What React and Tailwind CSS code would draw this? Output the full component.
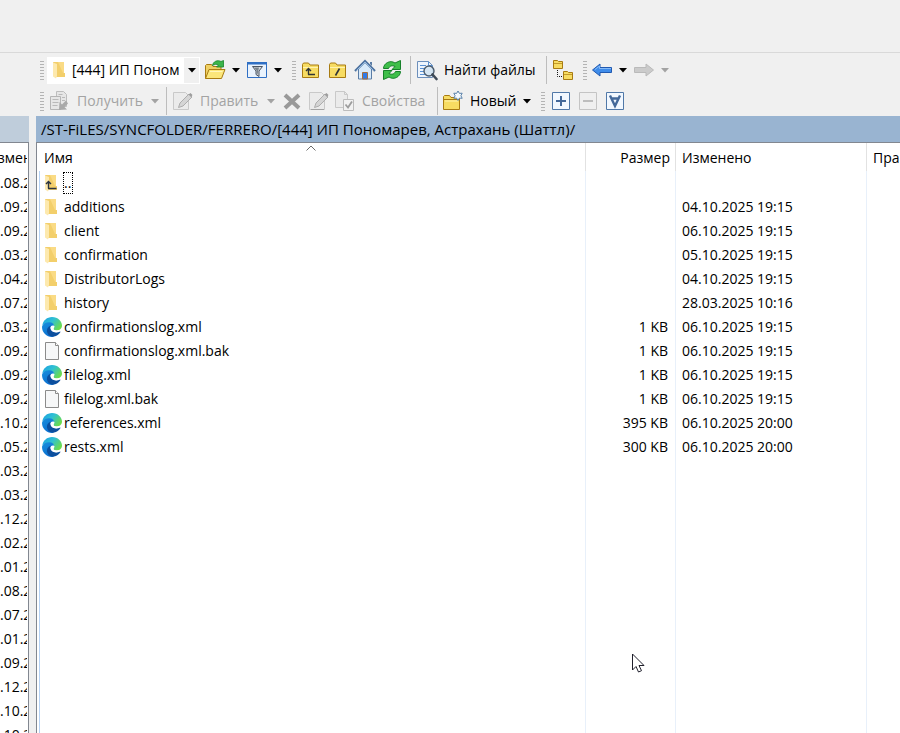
import React from "react";

const files = [
  ["..", "up", "", ""],
  ["additions", "folder", "", "04.10.2025 19:15"],
  ["client", "folder", "", "06.10.2025 19:15"],
  ["confirmation", "folder", "", "05.10.2025 19:15"],
  ["DistributorLogs", "folder", "", "04.10.2025 19:15"],
  ["history", "folder", "", "28.03.2025 10:16"],
  ["confirmationslog.xml", "edge", "1 KB", "06.10.2025 19:15"],
  ["confirmationslog.xml.bak", "file", "1 KB", "06.10.2025 19:15"],
  ["filelog.xml", "edge", "1 KB", "06.10.2025 19:15"],
  ["filelog.xml.bak", "file", "1 KB", "06.10.2025 19:15"],
  ["references.xml", "edge", "395 KB", "06.10.2025 20:00"],
  ["rests.xml", "edge", "300 KB", "06.10.2025 20:00"],
];

const leftDates = [
  ".08.2", ".09.2", ".09.2", ".03.2", ".04.2", ".07.2", ".03.2", ".09.2",
  ".09.2", ".09.2", ".10.2", ".05.2", ".03.2", ".03.2", ".12.2", ".02.2",
  ".01.2", ".08.2", ".07.2", ".01.2", ".09.2", ".12.2", ".10.2", ".10.2",
];

function FolderIcon({ up = false }) {
  return (
    <svg width="20" height="20" viewBox="0 0 20 20" className="shrink-0" aria-hidden="true">
      <path d="M3 2h11v11h1v4H6z" fill="#f3cf6b" />
      <path d="M8 2h6v11h-1z" fill="#fadb85" />
      <path d="M3 2.500 7 4v12l-1 2.500-3-2z" fill="#fde9ae" />
      {up && <path d="M6.500 15.500V9M4 11l2.500-2.500L9 11M6 15.500h8.500" fill="none" stroke="#2b3440" strokeWidth="1.400" />}
    </svg>
  );
}

function EdgeIcon() {
  return (
    <svg width="20" height="20" viewBox="0 0 20 20" className="shrink-0" aria-hidden="true">
      <defs>
        <linearGradient id="edgeTop" x1="0" y1="0" x2="1" y2="0.600">
          <stop offset="0" stopColor="#1b9de2" />
          <stop offset="0.500" stopColor="#2fc0d4" />
          <stop offset="1" stopColor="#6bdc4c" />
        </linearGradient>
        <linearGradient id="edgeSide" x1="0" y1="0" x2="0.500" y2="1">
          <stop offset="0" stopColor="#1a8fdc" />
          <stop offset="1" stopColor="#0b6fd0" />
        </linearGradient>
      </defs>
      <path d="M0.300 8.500C1 3.500 5 0 10 0c6 0 10 4.200 10 8.600 0 3-2.200 4.900-5 4.900-2.300 0-3.600-.8-3.600-1.500 0-.5.900-.9.900-2.400C12.300 7.500 10.200 6 7.200 6 4 6 1.300 7.300.3 8.500z" fill="url(#edgeTop)" />
      <path d="M0.200 9C1 6.900 3.900 5.300 7.200 5.300c3 0 4.900 1.400 5 3.700C9 8.600 7 10.500 7 13c0 3.500 2.500 6 5.500 6.600-.8.300-1.600.4-2.500.4C4.500 20 0 15.500 0 10z" fill="url(#edgeSide)" />
      <path d="M8.600 8.800C6 9.700 4.600 12 5 14.500c.4 3.200 3.800 5.600 7 5.100 2.800-.5 5-2.200 6.300-4.400.3-.5-.1-.7-.5-.5-3.800 1.700-9.400.5-9.400-3.900 0-.8.100-1.500.2-2z" fill="#0c4f9e" />
      <path d="M8.800 9.500c.8-1 2.300-1.500 3.500-.6 0 1.800-.9 2.300-.9 3.100 0 .9 1.300 1.500 3.600 1.500 1.300 0 2.500-.4 3.400-1-.6 1.400-2 2.500-3.800 2.700-3.500.4-6.300-2-5.800-5.700z" fill="#fff" />
    </svg>
  );
}

function FileIcon() {
  return (
    <svg width="20" height="20" viewBox="0 0 20 20" className="shrink-0" aria-hidden="true">
      <path d="M3.500 1.500h10l3 3v14h-13z" fill="#f6f7f8" stroke="#8b8b8b" />
      <path d="M13.500 1.500v3h3" fill="#fff" stroke="#8b8b8b" />
    </svg>
  );
}

function RowIcon({ kind }) {
  if (kind === "edge") return <EdgeIcon />;
  if (kind === "file") return <FileIcon />;
  return <FolderIcon up={kind === "up"} />;
}

function Caret({ gray = false }) {
  return (
    <svg width="8" height="5" viewBox="0 0 8 5" className="shrink-0" aria-hidden="true">
      <path d="M0 0h8L4 4.500z" fill={gray ? "#a3a3a3" : "#000"} />
    </svg>
  );
}

function Svg({ children }) {
  return (
    <svg width="22" height="22" viewBox="0 0 22 22" fill="none" className="shrink-0" aria-hidden="true">
      {children}
    </svg>
  );
}

const OpenFolder = () => (
  <Svg>
    <path d="M1.500 19.500V6.500l1-1h5l1.500 2h8v4" fill="#efd064" stroke="#a87b12" />
    <path d="M1.500 19.500 5 10.500h16L17.500 19.500z" fill="#fbe67a" stroke="#a87b12" strokeLinejoin="round" />
    <path d="M6 12.500h12.500" stroke="#fff6bd" />
    <path d="M8.500 6.500c.5-4 5-6 8.500-4l2.500-1v6.500h-7l2-2c-2-1.200-4-.6-6 .5z" fill="#3bb54a" stroke="#18832a" strokeWidth=".8" />
  </Svg>
);
const FilterWindow = () => (
  <Svg>
    <path d="M1.500 3.500h19v15h-19z" fill="#eaf3fd" stroke="#2f6fc4" />
    <path d="M1 3h20v2.500H1z" fill="#2f6fc4" />
    <path d="M6.500 7.500h10l-3.500 4.500v5.500l-3-2v-3.500z" fill="#d5dade" stroke="#4b5563" strokeLinejoin="round" />
    <path d="M8 8.500h5l-1.500 7-1-.5v-3.500z" fill="#7a848e" />
  </Svg>
);
const SmallFolder = ({ children }) => (
  <Svg>
    <path d="M2.500 18.500V5.500l1-1.500h5l1.500 2h8.500v12.500z" fill="#f7dc62" stroke="#a87b12" strokeLinejoin="round" />
    <path d="M3 8.500h15" stroke="#fff3ae" />
    {children}
  </Svg>
);
const Home = () => (
  <Svg>
    <path d="M4.500 10v10h13V10L11 3.500z" fill="#d8eafa" stroke="#5a7ca5" />
    <path d="M1 12 11 2l10 10" stroke="#4d729f" strokeWidth="2.200" />
    <path d="M2.500 11.500 11 3l8.500 8.500" stroke="#a8cdf0" strokeWidth=".8" />
    <path d="M8.500 13.500h5V20h-5z" fill="#2f7be8" stroke="#a86f3a" />
    <path d="M16 3h2v4l-2-2z" fill="#5a7ca5" />
  </Svg>
);
const Refresh = () => (
  <Svg>
    <path d="M2.500 9.500C2.500 4.500 9 .5 14 4L19.500 1.500V10.500h-8.500l3-3C11 6 8.500 7 7.500 9.500z" fill="#3fbf4a" stroke="#16812a" strokeLinejoin="round" />
    <path d="M19.500 12.500C19.500 17.500 13 21.500 8 18L2.500 20.500V11.500h8.500l-3 3C11 16 13.500 15 14.500 12.500z" fill="#3fbf4a" stroke="#16812a" strokeLinejoin="round" />
  </Svg>
);
const Find = () => (
  <Svg>
    <path d="M1.500 2.500h11l4 4v12h-15z" fill="#eef5fd" stroke="#6c8fbb" />
    <path d="M12.500 2.500v4h4M4 6.500h6M4 9.500h5M4 12.500h4M4 15.500h6" stroke="#5a92d4" />
    <circle cx="13" cy="12" r="5" fill="#d3e4f2" fillOpacity=".9" stroke="#4b5b6c" strokeWidth="1.400" />
    <path d="m16.500 15.500 4 4.500" stroke="#3f4a57" strokeWidth="2.600" strokeLinecap="round" />
  </Svg>
);
const Tree = () => (
  <Svg>
    <path d="M1.500 9.500v-8h4l1 1h4v7z" fill="#f7dc62" stroke="#a87b12" />
    <path d="M2 4.500h8" stroke="#c49a2a" />
    <path d="M11.500 20.500v-8h4l1 1h4v7z" fill="#f7dc62" stroke="#a87b12" />
    <path d="M12 15.500h8" stroke="#c49a2a" />
    <path d="M5.500 11v6.500H11" stroke="#111" strokeDasharray="1 1" />
  </Svg>
);
const Arrow = ({ forward = false }) => (
  <Svg>
    {forward ? (
      <path d="M20.500 11 13 5v3.500H1.500v5H13V17z" fill="#cbcbcb" stroke="#bababa" strokeLinejoin="round" />
    ) : (
      <>
        <path d="M1.500 11 9 5v3.500h11.500v5H9V17z" fill="#3f8cea" stroke="#2159b0" strokeLinejoin="round" />
        <path d="M4 10.500 8.500 7v2.500H20" stroke="#84baf8" />
      </>
    )}
  </Svg>
);
const Get = () => (
  <Svg>
    <path d="M7.500 1.500h7l3 3v12h-10z" fill="#e6e6e6" stroke="#bdbdbd" />
    <path d="M1.500 6.500h10v13h-10z" fill="#e6e6e6" stroke="#b5b5b5" />
    <path d="M3.500 9.500h6M3.500 12.500h6M3.500 15.500h5M9.500 4.500h4M13 7.500h3M13 10.500h3" stroke="#b9b9b9" />
    <path d="m17 10.500-4 4-2.500-2.500-.5 8 8-.5-2.500-2.500 3.500-3.500z" fill="#a9a9a9" />
  </Svg>
);
const Edit = ({ bar = false }) => (
  <Svg>
    <path d="M1.500 2.500h12l3 3v14h-15z" fill="#ebebeb" stroke="#c9c9c9" />
    {bar && <path d="M3 19.500h13" stroke="#a3a3a3" />}
    <path d="M6.500 17.500 8 13l9-9 3 3-9 9z" fill="#d5d5d5" stroke="#adadad" />
    <path d="m16.500 4.500 2-1.500 2 2-1.500 2z" fill="#9d9d9d" />
  </Svg>
);
const Cross = () => (
  <Svg>
    <path d="m4 5 14 13M18 5 4 18" stroke="#999" strokeWidth="4" />
  </Svg>
);
const Props = () => (
  <Svg>
    <path d="M1.500 1.500h9l3 3v13h-12z" fill="#ebebeb" stroke="#c9c9c9" />
    <path d="M10.500 1.500v3h3" stroke="#c9c9c9" />
    <path d="M9.500 9.500h10v11h-10z" fill="#f2f2f2" stroke="#bcbcbc" />
    <path d="m11.500 14.500 2.500 3 4-6" stroke="#9d9d9d" strokeWidth="1.800" />
  </Svg>
);
const NewFolder = () => (
  <Svg>
    <path d="M1.500 19.500V6.500l1-1h5l1.500 2h8.500V19.500z" fill="#f7dc62" stroke="#a87b12" strokeLinejoin="round" />
    <path d="M2 9.500h15" stroke="#a87b12" />
    <path d="M3 11h13" stroke="#fff3ae" />
    <path d="m16 1 1.400 2.400 2.800-.2-1.300 2.500 1.300 2.600-2.800-.2L16 10.500l-1.400-2.400-2.800.2 1.300-2.600-1.300-2.500 2.800.2z" fill="#f4f9fd" stroke="#5b82aa" />
  </Svg>
);
const Box = ({ kind }) => (
  <Svg>
    <path d="M2.500 2.500h17v17h-17z" fill={kind === "minus" ? "#efefef" : "#f2f8ff"} stroke={kind === "minus" ? "#c4c4c4" : "#5078a8"} />
    {kind === "plus" && <path d="M6 11h10M11 6v10" stroke="#44699a" strokeWidth="2" />}
    {kind === "minus" && <path d="M6 11h10" stroke="#bdbdbd" strokeWidth="2" />}
    {kind === "invert" && <path d="m6 5.500 5 10.500 5-10.500M7 8.500h8" stroke="#44699a" strokeWidth="2.400" />}
  </Svg>
);

function Grip() {
  return (
    <span className="flex w-1 shrink-0 flex-col gap-0.5" aria-hidden="true">
      {[0, 1, 2, 3, 4, 5, 6].map((n) => (
        <span key={n} className="h-px bg-[#b4b4b4]" />
      ))}
    </span>
  );
}

function Divider() {
  return <span className="h-7 w-px shrink-0 bg-[#bdbdbd]" aria-hidden="true" />;
}

function IconButton({ label, disabled = false, children }) {
  return (
    <button type="button" aria-label={label} disabled={disabled} className="flex h-7 w-[27px] shrink-0 items-center justify-center">
      {children}
    </button>
  );
}

function CaretButton({ label, disabled = false }) {
  return (
    <button type="button" aria-label={label} disabled={disabled} className="flex h-7 w-[15px] shrink-0 items-center justify-center">
      <Caret gray={disabled} />
    </button>
  );
}

function TextButton({ icon, text, width, disabled = false, caret = false }) {
  return (
    <button
      type="button"
      disabled={disabled}
      className={"flex h-7 shrink-0 items-center pl-0.5 whitespace-nowrap disabled:text-[#a3a3a3] " + width}
    >
      {icon}
      <span className="grow pl-1.5 text-left">{text}</span>
      {caret && <Caret gray={disabled} />}
    </button>
  );
}

function Toolbars() {
  return (
    <div className="flex shrink-0 flex-col gap-[3px] overflow-hidden border-t border-[#d9d9d9] pt-[3px] pb-px pl-10">
      <div className="flex h-7 items-center" role="toolbar" aria-label="Навигация">
        <Grip />
        <button type="button" aria-label="Каталог" className="ml-[3px] flex h-[27px] w-[153px] shrink-0 items-center bg-white">
          <span className="ml-[3px] flex"><FolderIcon /></span>
          <span className="ml-0.5 w-[107px] overflow-hidden text-left whitespace-nowrap">[444] ИП Пономарев</span>
          <span className="ml-[5px] flex h-[25px] w-[15px] items-center justify-center bg-[#f0f0f0]"><Caret /></span>
        </button>
        <span className="w-px" />
        <IconButton label="Открыть каталог"><OpenFolder /></IconButton>
        <CaretButton label="Список каталогов" />
        <IconButton label="Фильтр"><FilterWindow /></IconButton>
        <CaretButton label="Список фильтров" />
        <span className="flex pr-px pl-[7px]"><Grip /></span>
        <IconButton label="Вверх">
          <SmallFolder><path d="M8.500 15.500V10M6 12l2.500-2.500L11 12M8 15.500h7" stroke="#2f3437" strokeWidth="1.400" /></SmallFolder>
        </IconButton>
        <IconButton label="Корень">
          <SmallFolder><path d="m8.500 16.500 4-7" stroke="#2f3437" strokeWidth="1.600" /></SmallFolder>
        </IconButton>
        <IconButton label="Домой"><Home /></IconButton>
        <IconButton label="Обновить"><Refresh /></IconButton>
        <span className="w-[5px]" />
        <Divider />
        <span className="w-[3px]" />
        <TextButton icon={<Find />} text="Найти файлы" width="w-[132px]" />
        <Divider />
        <span className="w-0.5" />
        <IconButton label="Дерево"><Tree /></IconButton>
        <span className="flex pr-px pl-[7px]"><Grip /></span>
        <IconButton label="Назад"><Arrow /></IconButton>
        <CaretButton label="История назад" />
        <IconButton label="Вперёд" disabled><Arrow forward /></IconButton>
        <CaretButton label="История вперёд" disabled />
      </div>
      <div className="flex h-7 items-center" role="toolbar" aria-label="Действия">
        <Grip />
        <span className="w-[3px]" />
        <TextButton icon={<Get />} text="Получить" width="w-[112px]" disabled caret />
        <span className="w-[7px]" />
        <Divider />
        <span className="w-[3px]" />
        <TextButton icon={<Edit />} text="Править" width="w-[105px]" disabled caret />
        <span className="w-[3px]" />
        <IconButton label="Удалить" disabled><Cross /></IconButton>
        <IconButton label="Переименовать" disabled><Edit bar /></IconButton>
        <TextButton icon={<Props />} text="Свойства" width="w-[105px]" disabled />
        <Divider />
        <span className="w-0.5" />
        <TextButton icon={<NewFolder />} text="Новый" width="w-[91px]" caret />
        <span className="flex pr-0.5 pl-2.5"><Grip /></span>
        <IconButton label="Выделить"><Box kind="plus" /></IconButton>
        <IconButton label="Снять выделение" disabled><Box kind="minus" /></IconButton>
        <IconButton label="Обратить выделение"><Box kind="invert" /></IconButton>
      </div>
    </div>
  );
}

function HeadCell({ children, className }) {
  return <th className={"h-7 p-0 pt-0.5 font-normal whitespace-nowrap " + className}>{children}</th>;
}

function RemotePanel() {
  return (
    <section className="flex min-w-0 flex-1 flex-col">
      <div className="h-[26px] shrink-0 truncate bg-[#99b4d1] pl-[5px] text-[15px] leading-[26px]">
        /ST-FiLES/SYNCFOLDER/FERRERO/[444] ИП Пономарев, Астрахань (Шаттл)/
      </div>
      <div className="flex grow flex-col overflow-hidden border-t border-l border-[#828790] bg-white">
        <table className="h-full w-full table-fixed border-separate border-spacing-0">
          <colgroup>
            <col />
            <col className="w-[90px]" />
            <col className="w-[191px]" />
            <col className="w-[33px]" />
          </colgroup>
          <thead>
            <tr>
              <HeadCell className="relative border-r border-[#e2e2e2] pl-[7px] text-left">
                Имя
                <svg width="10" height="6" viewBox="0 0 10 6" fill="none" className="absolute top-0.5 left-1/2 -translate-x-1/2" aria-label="По возрастанию">
                  <path d="m.5 5.500 4.500-4.500 4.500 4.500" stroke="#6b6b6b" />
                </svg>
              </HeadCell>
              <HeadCell className="border-r border-[#e2e2e2] pr-[5px] text-right">Размер</HeadCell>
              <HeadCell className="border-r border-[#e2e2e2] pl-1.5 text-left">Изменено</HeadCell>
              <HeadCell className="overflow-hidden pl-1.5 text-left">Права</HeadCell>
            </tr>
          </thead>
          <tbody>
            {files.map(([name, kind, size, date]) => (
              <tr key={name} className="h-6">
                <td className="border-r border-[#e8f0fa] p-0 pl-0.5">
                  <div className="flex h-6 items-center border-l border-[#b5d2f5] pl-0.5">
                    <RowIcon kind={kind} />
                    <span className={kind === "up" ? "ml-px h-[22px] w-2.5 border border-dotted border-black leading-5" : "ml-0.5"}>{name}</span>
                  </div>
                </td>
                <td className="border-r border-[#e8f0fa] p-0 pr-[7px] text-right">{size}</td>
                <td className="border-r border-[#e8f0fa] p-0 pl-1.5">{date}</td>
                <td className="p-0" />
              </tr>
            ))}
            <tr>
              <td className="border-r border-[#e8f0fa] p-0 pl-0.5">
                <div className="h-full border-l border-[#b5d2f5]" />
              </td>
              <td className="border-r border-[#e8f0fa] p-0" />
              <td className="border-r border-[#e8f0fa] p-0" />
              <td className="p-0" />
            </tr>
          </tbody>
        </table>
      </div>
    </section>
  );
}

function LocalPanel() {
  return (
    <section className="flex w-[29px] shrink-0 flex-col overflow-hidden">
      <div className="h-[26px] shrink-0 bg-[#bfcddb]" />
      <div className="min-h-0 grow overflow-hidden border-t border-r border-[#828790] bg-white pr-px">
        <div className="overflow-hidden">
          <div className="-ml-0.5 h-7 pt-0.5 leading-[26px]">змен</div>
          {leftDates.map((d, i) => (
            <div key={i} className="h-6 leading-6">{d}</div>
          ))}
        </div>
      </div>
    </section>
  );
}

export default function App() {
  return (
    <main className="relative flex h-screen flex-col overflow-hidden bg-[#f0f0f0] font-['Open_Sans','Noto_Sans',sans-serif] text-sm text-black">
      <div className="h-13 shrink-0" />
      <Toolbars />
      <div className="flex min-h-0 grow gap-[7px]">
        <LocalPanel />
        <RemotePanel />
      </div>
      <svg width="14" height="21" viewBox="0 0 14 21" className="absolute top-[653px] left-[631px]" aria-hidden="true">
        <path d="M1.500 1v16l3.500-3.500 2.500 5.500 3-1.300L8 12.500h5z" fill="#fff" stroke="#1f1f2b" />
      </svg>
    </main>
  );
}
